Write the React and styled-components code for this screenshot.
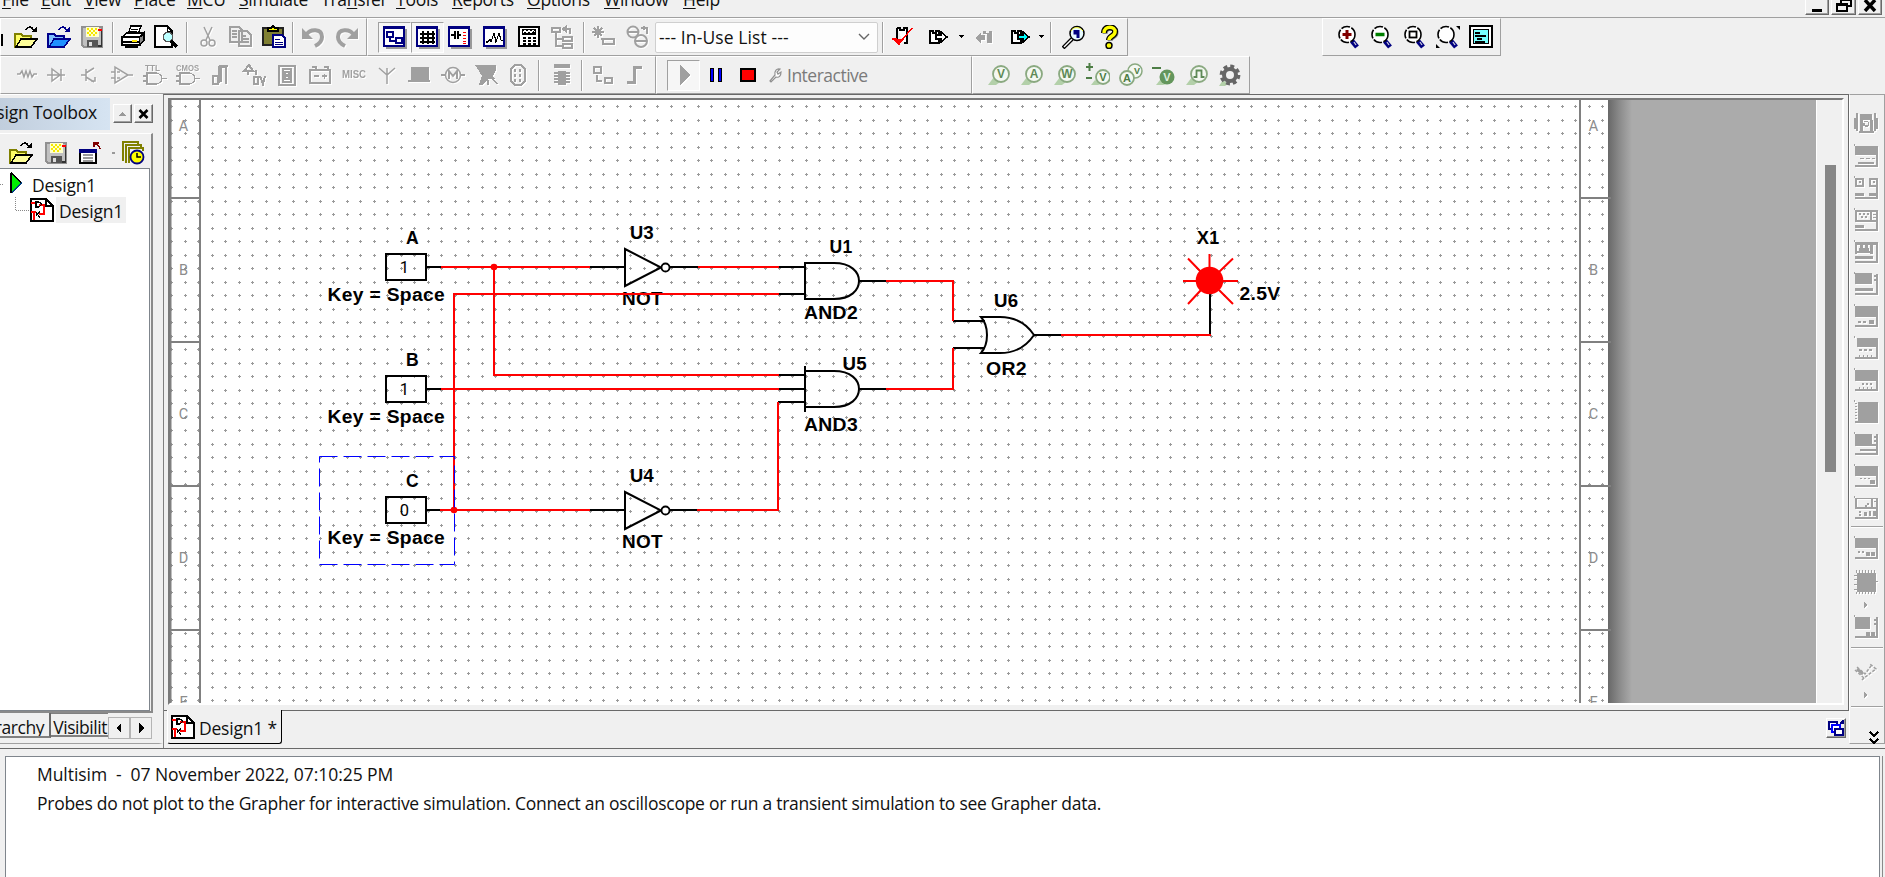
import React from 'react';
import styled, { createGlobalStyle, css } from 'styled-components';

const G = '#a0a0a0';
const UI = "'Open Sans', 'Noto Sans', sans-serif";

const Global = createGlobalStyle`
  * { box-sizing: border-box; }
  html, body { margin: 0; padding: 0; overflow: hidden; }
  body { background: #f0f0f0; font-family: ${UI}; color: #111; }
`;

/* ---------- shell ---------- */
const Shell = styled.div`
  width: 1885px; height: 877px; overflow: hidden;
  display: flex; flex-direction: column;
  background: #f0f0f0; font-size: 17.5px; letter-spacing: -0.45px;
`;
const MenuBar = styled.div`
  height: 18px; flex: none; display: flex; overflow: hidden;
  border-bottom: 1px solid ${G}; padding-left: 2px;
`;
const MenuItem = styled.span`
  width: ${p => p.$w}px; flex: none; margin-top: -13px; line-height: 24px; height: 30px;
  white-space: nowrap; letter-spacing: -0.25px;
  text-underline-offset: 2px;
  u { text-decoration-thickness: 1px; }
`;
const WindowButtons = styled.div`
  margin-left: auto; display: flex; gap: 2px; padding-right: 3px; margin-top: -6px;
`;
const RaisedButton = styled.span`
  width: ${p => p.$w}px; height: ${p => p.$h}px; flex: none;
  display: flex; align-items: center; justify-content: center;
  background: #f0f0f0;
  border: 1px solid; border-color: #fff #696969 #696969 #fff;
  box-shadow: inset -1px -1px 0 ${G};
`;

/* ---------- toolbars ---------- */
const BarRow = styled.div`height: 38px; flex: none; display: flex;`;
const Bar = styled.div`
  width: ${p => p.$w}px; flex: none; height: 38px; margin-left: ${p => p.$ml || 0}px;
  display: flex; align-items: center; padding-left: ${p => p.$pl || 0}px;
  border: 1px solid; border-color: #fff ${G} ${G} #fff;
`;
const Tool = styled.span`
  width: ${p => p.$w || 33}px; height: ${p => (p.$pressed ? 31 : 36)}px; flex: none;
  display: flex; align-items: center; justify-content: center;
  ${p => p.$pressed && css`border: 1px solid; border-color: ${G} #fff #fff ${G}; background: #f6f6f6;`}
  ${p => p.$off && css`color: ${G}; svg { filter: drop-shadow(1px 1px 0 #fff); }`}
`;
const Sep = styled.span`
  width: 2px; height: 31px; flex: none; background: ${G}; border-right: 1px solid #fff;
  margin: 0 ${p => p.$r ?? 3}px 0 ${p => p.$l ?? 3}px;
`;
const Combo = styled.div`
  width: 223px; height: 31px; flex: none; display: flex; align-items: center; justify-content: space-between;
  background: #fdfdfd; border: 1px solid #cfcfcf; border-radius: 2px; padding: 0 7px 0 3px;
  font-size: 17.5px; letter-spacing: 0.1px; line-height: 24px;
`;
const ModeLabel = styled.span`color: #7a7a7a; margin-left: 2px; line-height: 24px; letter-spacing: -0.5px;`;

/* ---------- body ---------- */
const Body = styled.div`height: 654px; flex: none; display: flex;`;
const SidePanel = styled.div`
  width: 163px; height: 650px; flex: none; display: flex; flex-direction: column;
  border-top: 1px solid #fff; border-bottom: 1px solid ${G}; border-right: 4px double #f0f0f0; overflow: hidden;
`;
const PanelHead = styled.div`height: 38px; flex: none; display: flex; padding-top: 3px;`;
const PanelTitle = styled.div`
  width: 110px; height: 32px; overflow: hidden; display: flex; justify-content: flex-end;
  padding-right: 13px; line-height: 28px; white-space: nowrap; letter-spacing: -0.2px;
  background: linear-gradient(90deg, #c1cedd, #d6e4f2);
`;
const HeadButtons = styled.div`display: flex; gap: 2px; padding: 6px 0 0 3px;`;
const PanelBody = styled.div`
  width: 153px; height: 580px; flex: none; display: flex; flex-direction: column;
  border-top: 1px solid #fff; border-right: 2px solid #8a8a8a; border-bottom: 2px solid #8a8a8a;
`;
const PanelTools = styled.div`height: 34px; flex: none; display: flex; align-items: center; padding: 3px 0 0 9px;`;
const PanelTool = styled.span`width: ${p => p.$w}px; flex: none; display: flex;`;
const Tree = styled.div`
  width: 150px; flex: 1; background: #fff; border: 1px solid #7f858c; border-left: 0; padding-top: 2px;
`;
const TreeRow = styled.div`
  height: 26px; display: flex; align-items: center; padding-left: ${p => p.$pl}px; line-height: 26px;
`;
const TreeLabel = styled.span`
  height: 26px; line-height: 28px; padding: 0 3px; letter-spacing: -0.2px; margin-left: ${p => p.$ml}px;
  background: ${p => (p.$on ? '#f0f0f0' : 'transparent')};
`;
const SideTabs = styled.div`height: 30px; display: flex; align-items: flex-start; overflow: hidden;`;
const SideTab = styled.span`
  width: ${p => p.$w}px; height: ${p => p.$h}px; flex: none; overflow: hidden; white-space: nowrap;
  display: flex; justify-content: flex-end; line-height: ${p => p.$h + 3}px; padding-right: ${p => p.$pr}px;
  border-bottom: 2px solid #808080; border-right: ${p => (p.$edge ? '2px solid #696969' : '0')};
  border-top: ${p => (p.$edge ? '0' : '1px solid #808080')}; letter-spacing: -0.45px;
`;
const NavButton = styled.span`
  width: 22px; height: 22px; margin-top: 4px; flex: none; display: flex; align-items: center; justify-content: center;
  border: 1px solid #b4b4b4;
`;

const DocFrame = styled.div`
  width: 1686px; height: 654px; flex: none; display: flex; flex-direction: column;
  border-top: 1px solid #696969; border-left: 1px solid #808080;
`;
const DocWell = styled.div`
  height: 615px; flex: none; padding: 3px 4px 0 4px; border-right: 1px solid #696969;
`;
const Viewport = styled.div`
  height: 607px; display: flex;
  border-style: solid; border-width: 2px 2px 2px 2px; border-color: #7a7a7a #fff #fff #7a7a7a;
`;
const Canvas = styled.svg`display: block; flex: none;`;
const ScrollTrack = styled.div`
  flex: 1; border-left: 1px solid #fff; display: flex; padding: 65px 0 0 8px; background: #f0f0f0;
`;
const Thumb = styled.div`width: 11px; height: 307px; background: #868686;`;
const TabStrip = styled.div`height: 37px; flex: none; display: flex;`;
const StripFill = styled.div`
  ${p => (p.$w ? `width: ${p.$w}px;` : 'flex: 1;')} border-top: 1px solid #696969;
  display: flex; justify-content: flex-end; padding: 7px 3px 0 0;
`;
const DocTab = styled.div`
  width: 115px; height: 34px; flex: none; display: flex; align-items: center; padding: 1px 0 0 3px;
  border-left: 1px solid #fff; border-right: 1px solid #000; border-bottom: 1px solid #000; border-radius: 0 0 3px 3px;
`;
const DocTabLabel = styled.span`margin-left: 4px; padding-top: 1px; letter-spacing: -0.2px; white-space: pre;`;

const RightBar = styled.div`
  width: 36px; height: 650px; flex: none; display: flex; flex-direction: column; align-items: flex-start;
  border: 1px solid; border-color: ${G} ${G} ${G} #fff; padding: 13px 0 0 1px;
`;
const Instr = styled.span`
  height: ${p => p.$h || 32}px; width: 30px; flex: none; display: flex; align-items: center; justify-content: center;
  color: ${G}; svg { filter: drop-shadow(1px 1px 0 #fff); }
`;
const HLine = styled.span`
  width: 32px; height: 2px; flex: none; background: ${G}; border-bottom: 1px solid #fff;
  margin: ${p => p.$t}px 0 ${p => p.$b}px;
`;
const More = styled.span`width: 30px; display: flex; padding-left: 17px;`;

const Output = styled.div`flex: 1; border-top: 1px solid #696969; padding: 7px 5px 0 5px; display: flex;`;
const OutputBox = styled.div`
  flex: 1; background: #fff; border: 1px solid #7f858c; border-bottom: 0; padding: 3px 0 0 31px;
  box-shadow: 2px 0 0 #f0f0f0, 3px 0 0 #8a8a8a;
`;
const OutputLine = styled.div`
  height: 29px; line-height: 29px; white-space: pre; letter-spacing: ${p => p.$ls}px;
`;

/* ---------- icons ---------- */
const Ico = ({ w = 24, h = 24, children, smooth }) => (
  <svg width={w} height={h} viewBox={`0 0 ${w} ${h}`} fill="none" stroke="currentColor"
    strokeWidth="1.5" shapeRendering={smooth ? 'auto' : 'crispEdges'}>{children}</svg>
);
const fillC = { fill: 'currentColor', stroke: 'none' };

const OpenFolder = ({ face = '#ffff66', front = '#ffff99', line = '#000', edge = '#808000' }) => (
  <Ico>
    <path d="M1 9h6l2 2h8v3H7l-5 8H1z" fill={face} stroke={edge} />
    <path d="M7 14h16l-6 8H2z" fill={front} stroke={line} />
    <path d="M12 5c2-4 6-4 8 1" stroke={line} />
    <path d="M17 7h6V2z" fill={line} stroke="none" />
  </Ico>
);
const Save = () => (
  <Ico w={22}>
    <path d="M1 2h20v20H3l-2-2z" fill="#c0c0c0" stroke="#909090" />
    <rect x="5" y="2" width="13" height="10" fill="#ffffcc" stroke="none" />
    <path d="M6 4h2m2 0h2m2 0h2M8 6h2m2 0h2M6 8h2m2 0h2m2 0h2M8 10h2m2 0h2" stroke="#f5e800" />
    <path d="M17 5h4" stroke="#f00" />
    <rect x="6" y="15" width="11" height="7" fill="#555" stroke="none" />
    <rect x="8" y="17" width="3" height="4" fill="#ddd" stroke="none" />
    <path d="M20.500 6v15H17" stroke="#333" />
  </Ico>
);
const Printer = () => (
  <Ico>
    <path d="M7 9l3-8h10l-3 8z" fill="#fff" stroke="#000" />
    <path d="M10 4h7M9 6.500h7" stroke="#000" strokeWidth="1" />
    <path d="M1 12l5-4h16l-3 4z" fill="#fff" stroke="#000" />
    <path d="M1 12h18v8H1z" fill="#fff" stroke="#000" strokeWidth="2" />
    <path d="M19 12l4-4v7l-4 5" fill="#888" stroke="#000" />
    <path d="M2 17h16" stroke="#000" /><path d="M11 15.500h5" stroke="#ffe600" strokeWidth="2" />
    <path d="M4 22h13" stroke="#000" />
  </Ico>
);
const Preview = () => (
  <Ico>
    <path d="M1 1h12l5 5v16H1z" fill="#fff" stroke="#000" />
    <path d="M13 1v5h5" stroke="#000" strokeWidth="1" />
    <circle cx="14" cy="12" r="4.500" fill="#bff" stroke="#555" />
    <path d="M17 16l6 6" stroke="#000" strokeWidth="3" />
  </Ico>
);
const Cut = () => <Ico smooth><path d="M8 2l6 13M16 2l-6 13" /><circle cx="8" cy="18" r="3" /><circle cx="16" cy="18" r="3" /></Ico>;
const Copy = () => (
  <Ico><path d="M1 2h9l3 3v12H1z M10 6h8l4 4v11H10z" fill="#f0f0f0" />
    <path d="M3 6h5M3 9h5M3 12h5M13 11h4M13 14h7M13 17h7" /></Ico>
);
const Paste = () => (
  <Ico>
    <rect x="1" y="3" width="20" height="17" fill="#808033" stroke="#222" />
    <path d="M6 6V3h3l2-2 2 2h3v3z" fill="#ffff00" stroke="#000" />
    <path d="M11 10h9l3 3v9H11z" fill="#fff" stroke="#000080" /><path d="M13 14h5M13 17h8M13 19.500h8" stroke="#000080" strokeWidth="1" />
  </Ico>
);
const Undo = () => <Ico smooth><path d="M6 9c3-5 15-6 15 3 0 5-3 7-7 9" strokeWidth="4" /><path d="M1 3v11h11z" {...fillC} /></Ico>;
const Redo = () => <Ico smooth><path d="M18 9c-3-5-15-6-15 3 0 5 3 7 7 9" strokeWidth="4" /><path d="M23 3v11H12z" {...fillC} /></Ico>;
const Win = ({ children }) => (
  <Ico>
    <path d="M3 23h20V4" stroke="#999" strokeWidth="2" />
    <rect x="1" y="2" width="20" height="19" fill="#fff" stroke="#000080" />
    <rect x="0" y="1" width="22" height="3" fill="#000080" stroke="none" />
    {children}
  </Ico>
);
const WinTree = () => <Win><path d="M4 7h6v5H4zM13 13h6v5h-6zM7 12v4h6" stroke="#000080" /><path d="M3.500 7h7M12.500 13h7" stroke="#000080" strokeWidth="2.500" /></Win>;
const WinGrid = () => <Win><path d="M7 6v13M12 6v13M17 6v13M4 9h15M4 13h15M4 17h15" stroke="#000" strokeWidth="1.500" /></Win>;
const WinComp = () => <Win><path d="M3 10h4M7 6v8M10 6v8M10 10h3" stroke="#000" strokeWidth="1.200" /><path d="M15 7h3M15 10h3M15 13h3M15 16h3M15 18.500h3" stroke="#f00" strokeWidth="1" /></Win>;
const WinGraph = () => <Win><path d="M3 17h2l2-3 1 3 3-9 2 9 3-9 2 7 2 1" stroke="#000" strokeWidth="1.200" /></Win>;
const Calc = () => (
  <Ico w={22}><rect x="1" y="2" width="20" height="19" fill="#fff" stroke="#000" strokeWidth="2" />
    <rect x="4" y="4" width="14" height="6" fill="#000" stroke="none" /><path d="M5 8l2-3 2 3 2-3 2 3 2-3 2 2" stroke="#fff" strokeWidth="1.200" />
    <path d="M5 13h3M10 13h3M15 13h3M5 16h3M10 16h3M15 16h3M5 19h3M10 19h3M15 19h3" stroke="#000" strokeWidth="1.500" /></Ico>
);
const Hier = () => <Ico><path d="M2 3h8v4H2zM13 12h9v4h-9zM13 19h9v4h-9zM6 7v14h7M6 14h7" /><path d="M14 4h6v5M17 1l-4 3 4 3" strokeWidth="2" /></Ico>;
const NewComp = () => <Ico><path d="M6 1v12M0 7h12M2 3l8 8M10 3l-8 8M9 14h3" /><rect x="11" y="14" width="11" height="5" strokeWidth="2" /></Ico>;
const Data = () => <Ico smooth><circle cx="7" cy="7" r="5.500" strokeWidth="2" /><circle cx="15" cy="16" r="6" strokeWidth="2" /><path d="M2 7h10M9 16h12M15 3h6v6M18 1v4" strokeWidth="2" /></Ico>;
const Erc = () => <Ico><path d="M6 3h3v2h4V3h3v15h-3M6 3v14" stroke="#000" strokeWidth="1.500" fill="#fff" /><path d="M1 14h4l3 5L21 3" stroke="#f00" strokeWidth="1.500" /><path d="M2 14h9l-4 6z" fill="#f00" stroke="none" /></Ico>;
const Fwd = ({ c = '#fff' }) => <Ico w={20}><path d="M2 6h3v2h3V6h3v12H2z" fill="#fff" stroke="#000" /><path d="M8 10h5V7l6 5-6 5v-3H8z" fill={c} stroke="#000" /></Ico>;
const Back = () => <Ico w={20}><path d="M9 6h3v2h3V6h3v12h-5V9H9z" {...fillC} /><path d="M11 10v5H7v3l-6-5 6-5v2z" {...fillC} /></Ico>;
const Caret = () => <Ico w={6} h={6}><path d="M0 1h6L3 4z" fill="#000" stroke="none" /></Ico>;
const Find = () => <Ico smooth><path d="M1 23l9-9" stroke="#000" strokeWidth="4" /><path d="M2 22l8-8" stroke="#fff" strokeWidth="1.500" /><circle cx="15" cy="8.500" r="7" fill="#e8fbff" stroke="#000" /><path d="M13 5v3h3v5M16 5v3" stroke="#000080" strokeWidth="3" /><path d="M9 6c2-4 8-5 12 0" stroke="#ffff33" strokeWidth="1" /></Ico>;
const Help = () => <Ico w={20} smooth><path d="M5 9c0-8 12-7 11-1 0 4-6 4-6 8" stroke="#888" strokeWidth="5" /><path d="M4 8c0-8 12-7 11-1 0 4-6 4-6 8" stroke="#000" strokeWidth="6" /><path d="M4 8c0-8 12-7 11-1 0 4-6 4-6 8" stroke="#ffff00" strokeWidth="3.500" /><circle cx="9" cy="20.500" r="3" fill="#ffff00" stroke="#000" /></Ico>;
const Zoom = ({ children }) => (
  <Ico smooth><path d="M15 16l5 6" stroke="#000080" strokeWidth="5" /><path d="M17 17l2 3" stroke="#ccd" strokeWidth="1.300" />
    <circle cx="10" cy="9.500" r="8" fill="#fff" stroke="#000" strokeWidth="1.600" strokeDasharray="9 1.500" />{children}</Ico>
);
const FullView = () => (
  <Ico><rect x="1" y="1" width="22" height="21" fill="#fff" stroke="#000" strokeWidth="2" /><rect x="4.500" y="4.500" width="15" height="14" fill="#7ff" stroke="#000" />
    <path d="M6 8h5M6 11h11M8 14h5M6 16.500h10" stroke="#000" strokeWidth="2" /></Ico>
);

/* component palette */
const P = ({ d, f, smooth, sw = 1.5, children }) => <Ico smooth={smooth}><path d={d} strokeWidth={sw} />{f && <path d={f} {...fillC} />}{children}</Ico>;
const IconText = ({ x, y, s, w, children }) => (
  <text x={x} y={y} fontSize={s} fontWeight="700" fontFamily="'Liberation Sans', sans-serif" letterSpacing="0"
    textLength={w} lengthAdjust="spacingAndGlyphs" {...fillC}>{children}</text>
);
const palette = [
  [24, <P d="M2 11h3l2-3 2 6 2-6 2 6 2-6 2 6 2-3h3" smooth />],
  [33, <P d="M3 12h18M8 6v12l8-6zM17 6v12" smooth />],
  [33, <P d="M4 12h5M9 6v12M9 10l8-5M9 14l8 5M14 18h4v-4" smooth />],
  [33, <P d="M5 4v16l13-8zM1 9h4M1 15h4M18 12h5M7 9h3M7 15h3" smooth />],
  [33, <Ico><path d="M3 10h9c9 0 9 11 0 11H4V10M0 13h4M0 18h4M19 15.500h5" /><IconText x="2" y="8" s="9.5" w="15">TTL</IconText></Ico>],
  [33, <Ico><path d="M3 10h9c9 0 9 11 0 11H4V10M0 13h4M0 18h4M19 15.500h5" /><IconText x="0" y="8" s="9.5" w="23">CMOS</IconText></Ico>],
  [33, <P d="M4 13h5v8H4zM10 3v17M12 3v16M17 3v18M12 4h5M19 3h-9" sw={2} />],
  [33, <P d="M2 8h9L7 2zM6 8v4M12 14h4v7h-4zM18 13l3 8 2-8M14 12V7" sw={2} />],
  [33, <P d="M4 3h16v19H4zM8 6h8v13H8zM10 9h4v3h-4zM10 13h4v3h-4z" sw={1.2} />],
  [33, <P d="M2 7h20v13H2zM4 4h4v3M16 4h4v3M6 13h5M14 13h5M16.500 11v5" />],
  [35, <Ico><IconText x="0" y="15" s="11" w="24">MISC</IconText></Ico>],
  [31, <P d="M12 21V6M4 5l8 7 8-7M12 5v7" smooth />],
  [34, <P d="M1 18h22" f="M4 4h18v13H4z" />],
  [33, <Ico smooth><circle cx="12" cy="12" r="7.500" /><path d="M0 12h4M20 12h4M8 16V8l4 5 4-5v8" strokeWidth="2" /></Ico>],
  [33, <P d="M18 15l5 6M14 17v5" f="M1 2h21v5l-3 6 2 3h-6l-7 6H5l3-9-3-5z" />],
  [32, <P d="M9 2h6l4 4v12l-4 4H9l-4-4V6zM9 6v3M9 11v3M9 16v3M14 6v3M14 11v3M14 16v3" sw={1.5} />],
];

/* measurement probes */
const Probe = ({ t, solid, children }) => (
  <Ico smooth>
    <path d="M1 22l6-8 6 5-4 3z" fill="#b3d0a9" stroke="none" />
    <circle cx="14" cy="11" r="8" fill={solid ? '#64965c' : '#f4f8f2'} stroke="#8aa980" strokeWidth="1.800" />
    {t && <text x="14" y="15.300" textAnchor="middle" fontSize="12" fontWeight="700" fontFamily="'Liberation Sans', sans-serif" letterSpacing="0" fill={solid ? '#dfe' : '#5f8a57'} stroke="none">{t}</text>}
    {children}
  </Ico>
);
const Gear = () => (
  <Ico smooth><path d="M1 23l4-6 5 4-3 2z" fill="#b3d0a9" stroke="none" />
    <circle cx="12" cy="12" r="8.700" stroke="#666" strokeWidth="3.400" strokeDasharray="3.900 2.930" />
    <circle cx="12" cy="12" r="6" stroke="#666" strokeWidth="4" fill="#f0f0f0" /></Ico>
);

/* instrument palette: filled shapes over a common chassis */
const chassis = 'M0 0h1v2H0zM1 21h23v2H1zM22 2h2v20h-2z';
const instruments = [
  'M2 1h2v18H2zM20 1h2v18h-2zM0 6h2v11H0zM22 6h2v11h-2zM6 2h12v6H6zM6 8h3v11H6zM16 8h3v11h-3zM10 9h4v1h-4zM9 11h2v3H9zM14 10h1v4h-1zM11 13h3v2h-3zM5 19h15v2H5z',
  `${chassis}M1 2h23v9H1zM6 14h4v1H6zM12 14h4v1h-4zM4 18h16v2H4zM18 14h3v1h-3z`,
  `${chassis}M1 2h9v2H1zM1 2h2v8H1zM8 2h2v8H8zM1 9h9v2H1zM5 5h2v2H5zM15 2h9v2h-9zM15 2h2v8h-2zM15 9h9v2h-9zM19 5h2v2h-2zM1 17h9v3H1zM15 17h8v3h-8z`,
  `${chassis}M1 2h23v2H1zM1 2h2v11H1zM1 12h23v2H1zM16 2h2v11h-2zM5 5h2v2H5zM9 5h2v2H9zM13 5h2v2h-2zM7 8h2v2H7zM11 8h2v2h-2zM19 6h3v1h-3zM19 9h3v1h-3zM1 17h9v3H1z`,
  `${chassis}M1 2h23v3H1zM1 2h2v12H1zM6 5h3v4H6zM11 5h3v4h-3zM3 11h14v2H3zM16 3h3v11h-3zM5 8h10v3H5zM1 16h18v3H1z`,
  `${chassis}M1 1h17v11H1zM20 3h2v2h-2zM20 7h2v2h-2zM1 16h18v3H1z`,
  `${chassis}M1 2h23v11H1zM4 17h3v2H4zM9 17h3v2H9zM15 16h5v4h-5z`,
  `${chassis}M3 2h21v9H3zM5 13h3v2H5zM10 13h3v2h-3zM15 13h3v2h-3zM5 19h1v2H5zM9 19h1v2H9zM13 19h1v2h-1zM17 19h1v2h-1z`,
  `${chassis}M1 2h23v11H1zM8 15h2v2H8zM12 15h2v2h-2zM16 15h2v2h-2zM5 19h1v2H5zM9 19h1v2H9zM13 19h1v2h-1zM17 19h1v2h-1z`,
  `${chassis}M4 2h20v20H4zM1 3h2v1H1zM1 6h2v1H1zM1 9h2v1H1zM1 12h2v1H1zM1 15h2v1H1zM1 18h2v1H1z`,
  `${chassis}M1 2h17v12H1zM20 4h2v2h-2zM20 8h2v2h-2zM6 17h16v2H6zM18 12h5v2h-5z`,
  `${chassis}M1 2h23v10H1zM6 14h2v1H6zM10 14h2v1h-2zM14 14h2v1h-2zM16 16h5v4h-5z`,
  `${chassis}M1 2h23v1H1zM1 2h2v11H1zM1 11h23v2H1zM17 2h2v9h-2zM20 5h3v1h-3zM13 7h2v2h-2zM11 9h2v2h-2zM5 15h2v2H5zM5 18h2v2H5zM10 16h3v4h-3zM15 15h2v5h-2zM19 15h3v5h-3z`,
];
const Shape = ({ d }) => <Ico><path d={d} {...fillC} /></Ico>;
const SmallArrow = () => <Ico w={6} h={8}><path d="M1 1l4 3-4 3z" {...fillC} /></Ico>;

const SheetIcon = () => (
  <Ico><path d="M1 1h15l7 7v15H1z" fill="#fff" stroke="#000" /><path d="M16 1v7h7" stroke="#000" />
    <path d="M1 5h5M1 14h5M4 14v8M9 7h5v9H9" stroke="#f00" /><path d="M6 4h3l3 2-3 3H6zM6 14l4 6M10 13l-4 5" stroke="#000" strokeWidth="1.200" /></Ico>
);
const NewSheet = () => <Ico><rect x="2" y="9" width="16" height="13" fill="#fff" stroke="#000" /><rect x="1" y="8" width="18" height="4" fill="#000080" stroke="none" /><path d="M5 14h10M5 17h10M5 20h10" stroke="#999" /><path d="M22 8c0-3-2-4-5-5M16 6V2h5" stroke="#800000" /></Ico>;
const History = () => <Ico smooth><path d="M1 20V1h15v3M4 22V4h15v3M7 22V7h14v3" stroke="#808000" strokeWidth="2" /><circle cx="15" cy="16" r="6.500" fill="#ffff00" stroke="#000080" strokeWidth="1.800" /><path d="M15 12v4h4" stroke="#000" /></Ico>;

/* ---------- schematic ---------- */
const Bold = ({ x, y, w, children }) => (
  <text x={x} y={y} fontFamily="'Liberation Sans', Arial, sans-serif" fontSize="18" fontWeight="700"
    fill="#000" textLength={w} lengthAdjust="spacingAndGlyphs" letterSpacing="0.3">{children}</text>
);
const marks = [['A', 131], ['B', 275], ['C', 419], ['D', 563], ['E', 707]];

const Switch = ({ y, name, value }) => (
  <g>
    <Bold x={406} y={y - 23} w={13}>{name}</Bold>
    <rect x="386" y={y - 13} width="40" height="26" fill="none" stroke="#000" strokeWidth="2" />
    <text x="404.500" y={y + 6} textAnchor="middle" fontFamily="Roboto, sans-serif" fontSize="16.500" letterSpacing="0" fill="#000">{value}</text>
    <path d={`M427 ${y}H441`} stroke="#000" strokeWidth="2" />
    <Bold x={327.5} y={y + 34} w={117.5}>Key = Space</Bold>
  </g>
);
const Inverter = ({ y, name }) => (
  <g>
    <Bold x={630} y={y - 28} w={24}>{name}</Bold>
    <Bold x={622} y={y + 38} w={41}>NOT</Bold>
    <path d={`M590 ${y}H625M625 ${y - 18}V${y + 19}L661 ${y + 0.5}ZM670 ${y}H698`} fill="none" stroke="#000" strokeWidth="2" />
    <circle cx="665.500" cy={y + 0.5} r="4" fill="#fff" stroke="#000" strokeWidth="1.800" />
  </g>
);

const Schematic = () => (
  <Canvas width="1646" height="603" viewBox="170 100 1646 603">
    <defs>
      <pattern id="grid" x="170" y="105" width="27" height="27" patternUnits="userSpaceOnUse">
        {[[1, 1], [15, 1], [1, 15], [15, 15]].map(([x, y]) => (
          <path key={`${x}-${y}`} d={`M${x - 1} ${y + 0.5}h3M${x + 0.5} ${y - 1}v3`} stroke="#9a9a9a" strokeWidth="1" shapeRendering="crispEdges" />
        ))}
      </pattern>
      <linearGradient id="shade" x1="0" x2="1" y1="0" y2="0">
        <stop offset="0" stopColor="#686868" /><stop offset="0.500" stopColor="#8c8c8c" /><stop offset="1" stopColor="#ababab" />
      </linearGradient>
    </defs>
    <rect x="170" y="100" width="1440" height="603" fill="#fff" />
    <rect x="170" y="100" width="1438" height="603" fill="url(#grid)" />
    <rect x="1608" y="100" width="208" height="603" fill="#ababab" />
    <rect x="1608" y="100" width="24" height="603" fill="url(#shade)" />
    <path d="M200 100V703M1580 100V703M170.500 100V703" stroke="#808080" strokeWidth="2" />
    <path d="M171 198H200M171 342H200M171 486H200M171 630H200M1580 198H1611M1580 342H1611M1580 486H1611M1580 630H1611" stroke="#808080" strokeWidth="2" />
    {marks.map(([t, y]) => [183.5, 1593.5].map(x => (
      <text key={`${t}${x}`} x={x} y={y} textAnchor="middle" fontFamily="Roboto, sans-serif" fontSize="14.500" letterSpacing="0" fill="#8c8c8c">{t}</text>
    )))}

    <Switch y={267} name="A" value="1" />
    <Switch y={389} name="B" value="1" />
    <Switch y={510} name="C" value="0" />
    <Inverter y={267} name="U3" />
    <Inverter y={510} name="U4" />

    <Bold x={829.5} y={252.5} w={23}>U1</Bold>
    <Bold x={804} y={319} w={54}>AND2</Bold>
    <Bold x={842.5} y={370} w={24.5}>U5</Bold>
    <Bold x={804} y={431} w={54}>AND3</Bold>
    <Bold x={994} y={307} w={24.5}>U6</Bold>
    <Bold x={986} y={374.5} w={41}>OR2</Bold>
    <Bold x={1197} y={244} w={22.5}>X1</Bold>
    <Bold x={1239.5} y={299.5} w={41}>2.5V</Bold>

    <g fill="none" stroke="#000" strokeWidth="2">
      <path d="M805 263H834C851 263 859 272 859 281S851 299 834 299H805ZM779 267H805M779 294H805M859 281H886" />
      <path d="M805 371H834C851 371 859 380 859 389S851 407 834 407H805M805 366V412M779 375H805M779 389H805M778 402H805M859 389H886" />
      <path d="M981 317H1000C1018 317 1028 326 1034 335C1028 344 1018 353 1000 353H981C989 344 989 326 981 317ZM953 321H985M953 348H985M1034 335H1061M1210 294V335" />
    </g>
    <g fill="none" stroke="#f00" strokeWidth="2">
      <path d="M441 267H590M698 267H779M494 267V375H779M441 389H779M454 510V294H779M440 510H590M697 510H778V402" />
      <path d="M886 281H953V321M886 389H953V348M1061 335H1211" />
      <path d="M1209.500 254V267M1183 281H1196M1223 281H1238M1188 258.500L1201 272M1233 258.500L1219 272M1188 304L1201 290M1233 304L1219 290" />
    </g>
    <g fill="#f00"><circle cx="1209.500" cy="280.500" r="13.800" /><circle cx="494" cy="267" r="3.300" /><circle cx="454" cy="510" r="3.300" /></g>
    <path d="M319.500 456.500H454.500V564.500H319.500Z" fill="none" stroke="#0000ff" strokeWidth="1" strokeDasharray="18 6" />
  </Canvas>
);

const menus = [
  ['', 'F', 'ile', 39], ['', 'E', 'dit', 43], ['', 'V', 'iew', 50], ['', 'P', 'lace', 53], ['', 'M', 'CU', 52],
  ['', 'S', 'imulate', 82], ['Tra', 'n', 'sfer', 75], ['', 'T', 'ools', 56], ['', 'R', 'eports', 75],
  ['', 'O', 'ptions', 77], ['', 'W', 'indow', 79], ['', 'H', 'elp', 50],
];

export default function App() {
  return (
    <Shell>
      <Global />
      <MenuBar>
        {menus.map(([a, u, b, w]) => <MenuItem key={u + b} $w={w}>{a}<u>{u}</u>{b}</MenuItem>)}
        <WindowButtons>
          <RaisedButton $w={24} $h={21}><Ico w={12} h={14}><path d="M1 12h10" stroke="#000" strokeWidth="3" /></Ico></RaisedButton>
          <RaisedButton $w={25} $h={21}><Ico w={16} h={16}><path d="M5 6V2h10v7h-4M5 3h10M1 7h10v7H1zM1 8h10" stroke="#000" strokeWidth="1.500" /></Ico></RaisedButton>
          <RaisedButton $w={24} $h={21}><Ico w={14} h={14} smooth><path d="M2 2l10 11M12 2L2 13" stroke="#000" strokeWidth="3.400" /></Ico></RaisedButton>
        </WindowButtons>
      </MenuBar>

      <BarRow>
        <Bar $w={367}>
          <Tool $w={8}><Ico w={8}><path d="M0 9h2v12H0" fill="#000" stroke="none" /></Ico></Tool>
          <Tool><OpenFolder /></Tool>
          <Tool><OpenFolder face="#80c0ff" front="#1e90ff" line="#00008b" edge="#00008b" /></Tool>
          <Tool><Save /></Tool>
          <Sep $l={4} $r={2} />
          <Tool><Printer /></Tool>
          <Tool><Preview /></Tool>
          <Sep $l={4} $r={3} />
          <Tool $off><Cut /></Tool>
          <Tool $off><Copy /></Tool>
          <Tool><Paste /></Tool>
          <Sep $l={2} $r={2} />
          <Tool $off><Undo /></Tool>
          <Tool $w={36} $off><Redo /></Tool>
        </Bar>
        <Bar $w={761} $pl={10}>
          <Tool $pressed><WinTree /></Tool>
          <Tool $pressed><WinGrid /></Tool>
          <Tool $w={32}><WinComp /></Tool>
          <Tool $w={37}><WinGraph /></Tool>
          <Tool $w={32}><Calc /></Tool>
          <Tool $off><Hier /></Tool>
          <Sep $l={5} $r={2} />
          <Tool $off><NewComp /></Tool>
          <Tool $w={35} $off><Data /></Tool>
          <Combo><span>--- In-Use List ---</span><Ico w={12} h={8} smooth><path d="M1 1l5 5 5-5" stroke="#666" strokeWidth="1.400" /></Ico></Combo>
          <Sep $l={4} $r={2} />
          <Tool><Erc /></Tool>
          <Tool $w={38}><Fwd /></Tool>
          <Tool $w={8}><Caret /></Tool>
          <Tool $w={37} $off><Back /></Tool>
          <Tool $w={35}><Fwd c="#00ffff" /></Tool>
          <Tool $w={8}><Caret /></Tool>
          <Sep $l={5} $r={3} />
          <Tool $w={38}><Find /></Tool>
          <Tool $w={34}><Help /></Tool>
        </Bar>
        <Bar $w={179} $ml={194} $pl={9}>
          <Tool><Zoom><path d="M5.500 9.500h9M10 5v9" stroke="#800000" strokeWidth="3" /></Zoom></Tool>
          <Tool><Zoom><path d="M5.500 9.500h9" stroke="#008000" strokeWidth="3.500" /></Zoom></Tool>
          <Tool><Zoom><rect x="6.500" y="6.500" width="7" height="6" stroke="#000" strokeWidth="1.800" /></Zoom></Tool>
          <Tool><Zoom><path d="M20 1h4v4zM0 19v4h4z" fill="#000" stroke="none" /></Zoom></Tool>
          <Tool><FullView /></Tool>
        </Bar>
      </BarRow>

      <BarRow>
        <Bar $w={656}>
          <Tool $w={14} />
          {palette.map(([w, icon], i) => <Tool key={i} $w={w} $off>{icon}</Tool>)}
          <Sep $l={4} $r={5} />
          <Tool $off><P d="M8 10H4M8 13H4M8 16H4M8 19H4M16 10h4M16 13h4M16 16h4M16 19h4" f="M4 1h16v4H4zM8 8h8v14H8z" /></Tool>
          <Sep $l={3} $r={3} />
          <Tool $off><P d="M3 4h7v6H3zM14 15h7v5h-7zM6 12v6h5M14 15h8" sw={2} /></Tool>
          <Tool $off><P d="M3 19h7V4h8" sw={3} /></Tool>
        </Bar>
        <Bar $w={316} $pl={10}>
          <Tool $pressed $off><Ico><path d="M8 2v20l10-10z" {...fillC} /></Ico></Tool>
          <Tool $w={31}><Ico w={12} h={14}><path d="M0 0h4v14H0zM8 0h4v14H8z" fill="#000" stroke="none" /><path d="M1 1h2v12H1zM9 1h2v12H9z" fill="#0000ff" stroke="none" /></Ico></Tool>
          <Tool><Ico w={16} h={14}><rect x="1" y="1" width="14" height="12" fill="#f00" stroke="#000" /></Ico></Tool>
          <Tool $w={21}><Ico w={14} h={16} smooth><path d="M2 14L7 8c-1-4 2-7 5-6L9 5l1 2 3-2c0 4-2 6-5 5l-5 5z" stroke="#909090" strokeWidth="1.200" fill="#fff" /></Ico></Tool>
          <ModeLabel>Interactive</ModeLabel>
        </Bar>
        <Bar $w={278} $pl={9}>
          <Tool><Probe t="V" /></Tool>
          <Tool><Probe t="A" /></Tool>
          <Tool><Probe t="W" /></Tool>
          <Tool><Ico smooth><path d="M5 22l4-5 6 4-3 1z" fill="#b3d0a9" stroke="none" /><circle cx="17" cy="14" r="7" fill="#f4f8f2" stroke="#8aa980" strokeWidth="1.800" />
            <text x="17" y="18" textAnchor="middle" fontSize="11" fontWeight="700" letterSpacing="0" fontFamily="'Liberation Sans', sans-serif" fill="#4d7d45" stroke="none">V</text>
            <path d="M0 4h7M3.500 0v8M0 15h6" stroke="#4d7d45" strokeWidth="2" /></Ico></Tool>
          <Tool>
            <Ico smooth><circle cx="16" cy="8" r="7" fill="#f4f8f2" stroke="#8aa980" /><circle cx="8" cy="15" r="7" fill="#f4f8f2" stroke="#8aa980" strokeWidth="1.800" />
              <text x="8" y="19" textAnchor="middle" fontSize="11" fontWeight="700" letterSpacing="0" fontFamily="'Liberation Sans', sans-serif" fill="#4d7d45" stroke="none">A</text>
              <text x="18" y="11" textAnchor="middle" fontSize="9" fontWeight="700" letterSpacing="0" fontFamily="'Liberation Sans', sans-serif" fill="#4d7d45" stroke="none">V</text></Ico>
          </Tool>
          <Tool><Ico smooth><path d="M4 22l4-5 6 4-3 1z" fill="#b3d0a9" stroke="none" /><circle cx="15" cy="14" r="7.500" fill="#64965c" stroke="none" />
            <text x="15" y="18" textAnchor="middle" fontSize="11" fontWeight="700" letterSpacing="0" fontFamily="'Liberation Sans', sans-serif" fill="#dfeedd" stroke="none">V</text>
            <path d="M0 5h9" stroke="#4d7d45" strokeWidth="2" /></Ico></Tool>
          <Tool><Probe><path d="M8.500 14h3V7.500h5V14h3" stroke="#5f8a57" strokeWidth="1.800" /></Probe></Tool>
          <Tool><Gear /></Tool>
        </Bar>
      </BarRow>

      <Body>
        <SidePanel>
          <PanelHead>
            <PanelTitle>Design Toolbox</PanelTitle>
            <HeadButtons>
              <RaisedButton $w={19} $h={19}><Ico w={9} h={6}><path d="M0 5h9L4.500 1z" fill="#999" stroke="none" /></Ico></RaisedButton>
              <RaisedButton $w={19} $h={19}><Ico w={11} h={10} smooth><path d="M1.500 1l8 8M9.500 1l-8 8" stroke="#000" strokeWidth="2.600" /></Ico></RaisedButton>
            </HeadButtons>
          </PanelHead>
          <PanelBody>
            <PanelTools>
              <PanelTool $w={36}><OpenFolder /></PanelTool>
              <PanelTool $w={33}><Save /></PanelTool>
              <PanelTool $w={34}><NewSheet /></PanelTool>
              <PanelTool $w={10}><Ico w={4} h={2}><path d="M0 1h3" stroke="#999" /></Ico></PanelTool>
              <PanelTool $w={26}><History /></PanelTool>
            </PanelTools>
            <Tree>
              <TreeRow $pl={0}>
                <Ico w={24} h={26}><path d="M0 13.500h4" stroke="#888" strokeWidth="1" strokeDasharray="1 1" /><path d="M11 2v20l11-10z" fill="#00f000" stroke="none" /><path d="M11 2v20M11 2l11 10" stroke="#000" /><path d="M22 12L12 21" stroke="#004080" /></Ico>
                <TreeLabel $ml={5}>Design1</TreeLabel>
              </TreeRow>
              <TreeRow $pl={15}>
                <Ico w={15} h={26}><path d="M.5 0v13.500h14" stroke="#888" strokeWidth="1" strokeDasharray="1 1" /></Ico>
                <SheetIcon /><TreeLabel $ml={2} $on>Design1</TreeLabel>
              </TreeRow>
            </Tree>
          </PanelBody>
          <SideTabs>
            <SideTab $w={51} $h={25} $pr={5} $edge>Hierarchy</SideTab>
            <SideTab $w={57} $h={24} $pr={1}>Visibilit</SideTab>
            <NavButton><Ico w={6} h={10}><path d="M5 0v10L0 5z" fill="#000" stroke="none" /></Ico></NavButton>
            <NavButton><Ico w={6} h={10}><path d="M1 0v10l5-5z" fill="#000" stroke="none" /></Ico></NavButton>
          </SideTabs>
        </SidePanel>

        <DocFrame>
          <DocWell>
            <Viewport>
              <Schematic />
              <ScrollTrack><Thumb /></ScrollTrack>
            </Viewport>
          </DocWell>
          <TabStrip>
            <StripFill $w={3} />
            <DocTab><SheetIcon /><DocTabLabel>Design1 *</DocTabLabel></DocTab>
            <StripFill>
              <RaisedButton $w={20} $h={20}>
                <Ico w={18} h={18}><path d="M2 3h8v7H2z" stroke="#000080" fill="#fff" /><path d="M5 6h8v7H5z" stroke="#00f" fill="#fff" /><path d="M8 10h8v6H8z" stroke="#000080" fill="#fff" strokeWidth="2" /><path d="M13 5l3-3M16 1v4" stroke="#000080" strokeWidth="2" /></Ico>
              </RaisedButton>
            </StripFill>
          </TabStrip>
        </DocFrame>

        <RightBar>
          {instruments.map((d, i) => <Instr key={i}><Shape d={d} /></Instr>)}
          <HLine $t={2} $b={4} />
          <Instr><Shape d={`${chassis}M1 2h23v10H1zM4 15h2v2H4zM8 15h2v2H8zM12 16h4v4h-4zM17 16h4v4h-4z`} /></Instr>
          <Instr $h={36}><Shape d="M3 3h19v19H3zM2 0h1v3H2zM5 0h1v3H5zM8 0h1v3H8zM11 0h1v3h-1zM14 0h1v3h-1zM17 0h1v3h-1zM20 0h1v3h-1zM2 22h1v2H2zM5 22h1v2H5zM8 22h1v2H8zM11 22h1v2h-1zM14 22h1v2h-1zM17 22h1v2h-1zM20 22h1v2h-1zM0 5h3v1H0zM0 9h3v1H0zM0 14h3v1H0zM0 19h3v1H0zM22 11h2v1h-2z" /></Instr>
          <Instr $h={10}><SmallArrow /></Instr>
          <Instr $h={34}><Shape d={`${chassis}M1 2h15v12H1zM20 4h2v2h-2zM20 8h2v2h-2zM12 17h4v4h-4zM17 17h4v4h-4z`} /></Instr>
          <HLine $t={3} $b={6} />
          <Instr $h={34}><Ico smooth><path d="M1 10l9 8 12-9-6-5M3 7l8 7 6-8M8 20l3-3" strokeDasharray="3 1.500" /><path d="M3 9l6 5" strokeWidth="3" /></Ico></Instr>
          <Instr $h={12}><SmallArrow /></Instr>
          <HLine $t={5} $b={23} />
          <More><Ico w={12} h={14}><path d="M2 1l4 4 4-4M2 8l4 4 4-4" stroke="#000" strokeWidth="2.500" /></Ico></More>
        </RightBar>
      </Body>

      <Output>
        <OutputBox>
          <OutputLine $ls={-0.06}>{'Multisim  -  07 November 2022, 07:10:25 PM'}</OutputLine>
          <OutputLine $ls={-0.265}>Probes do not plot to the Grapher for interactive simulation. Connect an oscilloscope or run a transient simulation to see Grapher data.</OutputLine>
        </OutputBox>
      </Output>
    </Shell>
  );
}
